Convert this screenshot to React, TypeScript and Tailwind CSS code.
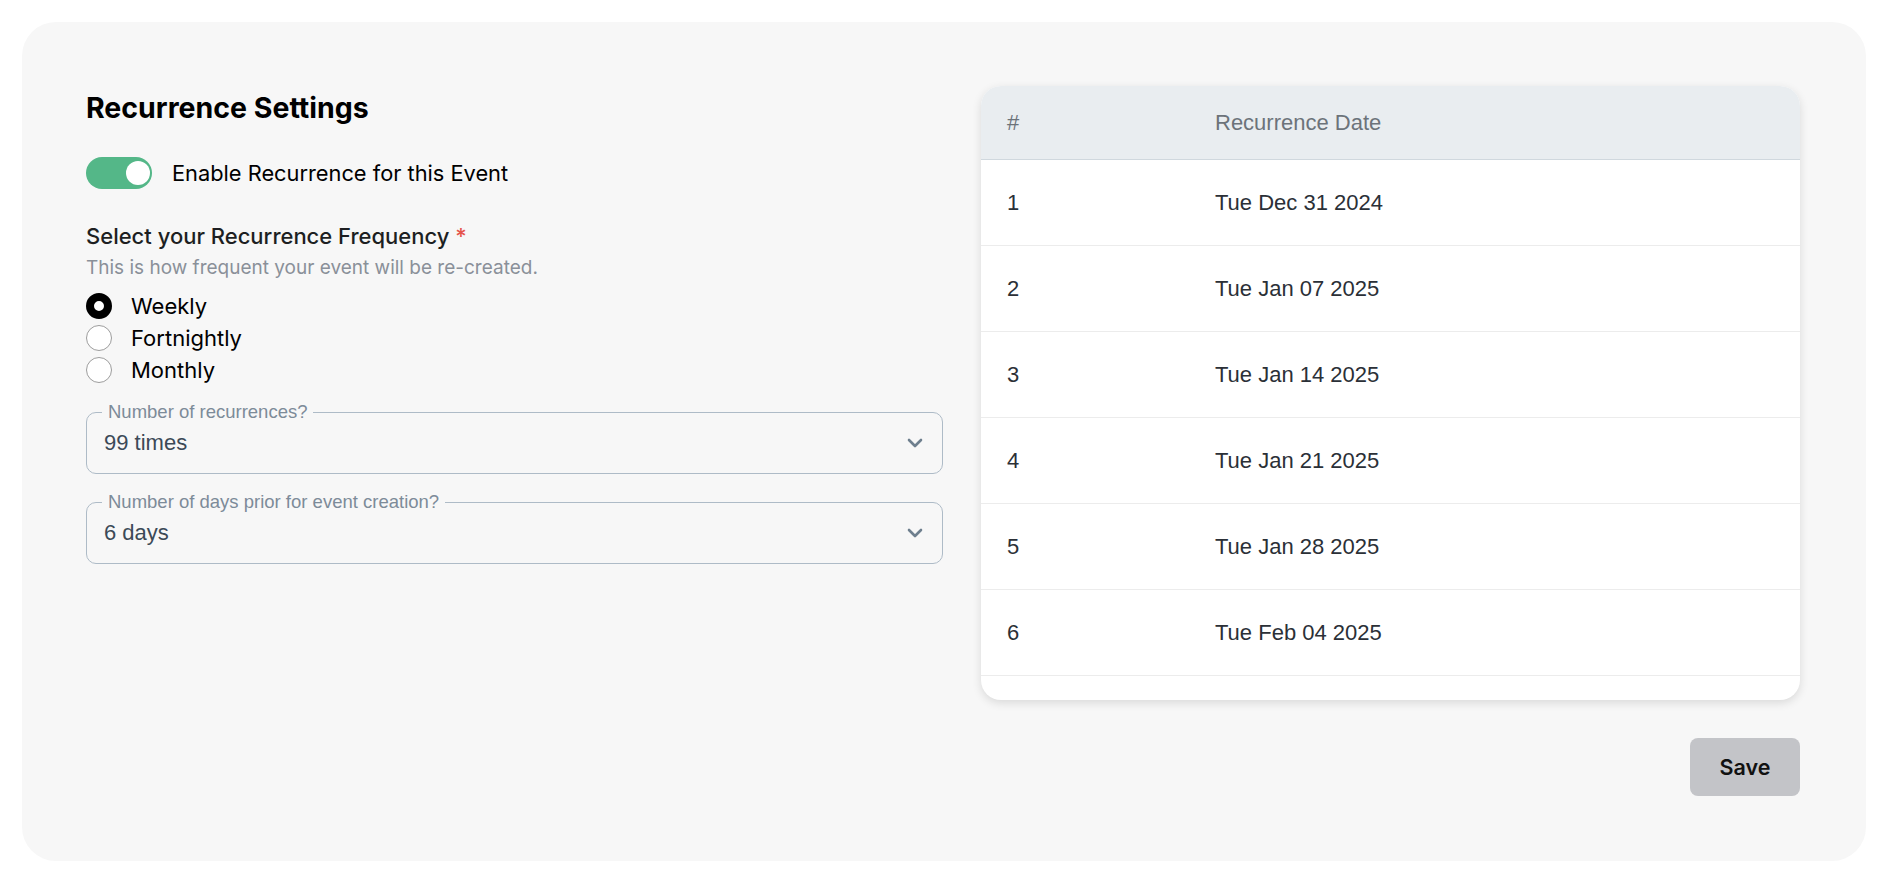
import { useState } from "react";

const dates = [
  "Tue Dec 31 2024",
  "Tue Jan 07 2025",
  "Tue Jan 14 2025",
  "Tue Jan 21 2025",
  "Tue Jan 28 2025",
  "Tue Feb 04 2025",
];

const frequencies = ["Weekly", "Fortnightly", "Monthly"];

function Chevron() {
  return (
    <svg width="16" height="10" viewBox="0 0 16 10" fill="none">
      <polyline
        points="2,2 8,8 14,2"
        stroke="#6e7f8e"
        strokeWidth="2.6"
        strokeLinecap="round"
        strokeLinejoin="round"
      />
    </svg>
  );
}

function OutlinedSelect({ label, value }: { label: string; value: string }) {
  return (
    <div className="relative h-[62px] rounded-[10px] border border-[#aebbc7] pl-[17px] pr-[19px] flex items-center justify-between">
      <span className="absolute left-[15px] top-[-11px] px-[6px] bg-[#f7f7f7] text-[18.5px] leading-[20px] text-[#7d8b99] font-['Liberation_Sans',Arial,sans-serif]">
        {label}
      </span>
      <span className="text-[22px] leading-[28px] text-[#3c4a57] font-['Liberation_Sans',Arial,sans-serif]">
        {value}
      </span>
      <Chevron />
    </div>
  );
}

export default function App() {
  const [enabled, setEnabled] = useState(true);
  const [freq, setFreq] = useState("Weekly");

  return (
    <main className="min-h-screen bg-white pt-[22px] pl-[22px] pr-[24px] pb-[24px] font-['Inter',sans-serif]">
      <div className="bg-[#f7f7f7] rounded-[34px] pt-[64px] pb-[65px] pl-[64px] pr-[66px] grid grid-cols-2">
        <section className="flex flex-col">
          <h1 className="text-[28.5px] leading-[44px] font-bold text-black">
            Recurrence Settings
          </h1>

          <div className="mt-[27px] h-[32px] flex items-center gap-[20px]">
            <button
              type="button"
              onClick={() => setEnabled(!enabled)}
              className={`relative w-[66px] h-[32px] rounded-full ${
                enabled ? "bg-[#54b788]" : "bg-[#c6c8cc]"
              }`}
            >
              <span
                className={`absolute top-[4px] w-[24px] h-[24px] rounded-full bg-white ${
                  enabled ? "right-[2px]" : "left-[3px]"
                }`}
              />
            </button>
            <span className="text-[21.8px] leading-[32px] text-black">
              Enable Recurrence for this Event
            </span>
          </div>

          <p className="mt-[33px] text-[22px] leading-[28px] font-medium text-[#1d1f22]">
            Select your Recurrence Frequency{" "}
            <span className="text-[#e5534b]">*</span>
          </p>
          <p className="mt-[6px] text-[19px] leading-[24px] text-[#8a9099]">
            This is how frequent your event will be re-created.
          </p>

          <div className="mt-[10px] flex flex-col">
            {frequencies.map((f) => (
              <label
                key={f}
                onClick={() => setFreq(f)}
                className="h-[32px] flex items-center gap-[19px] cursor-pointer"
              >
                <span
                  className={`w-[26px] h-[26px] rounded-full bg-white ${
                    freq === f
                      ? "border-[8px] border-black"
                      : "border border-[#9d9d9d]"
                  }`}
                />
                <span className="text-[22px] leading-[32px] text-black">{f}</span>
              </label>
            ))}
          </div>

          <div className="mt-[26px] flex flex-col gap-[28px]">
            <OutlinedSelect label="Number of recurrences?" value="99 times" />
            <OutlinedSelect
              label="Number of days prior for event creation?"
              value="6 days"
            />
          </div>
        </section>

        <section className="pl-[38px] flex flex-col">
          <div className="rounded-[20px] overflow-hidden bg-white shadow-[0_3px_10px_rgba(0,0,0,0.12)] font-['Liberation_Sans',Arial,sans-serif] text-[22px]">
            <div className="h-[74px] bg-[#e9edf0] border-b border-[#d0d8de] grid grid-cols-[209px_1fr] items-center text-[#6c737a]">
              <span className="pl-[26px]">#</span>
              <span className="pl-[25px]">Recurrence Date</span>
            </div>
            <div className="h-[540px]">
              {dates.map((d, i) => (
                <div
                  key={d}
                  className="h-[86px] border-b border-[#ececec] grid grid-cols-[209px_1fr] items-center text-[#2b3037]"
                >
                  <span className="pl-[26px]">{i + 1}</span>
                  <span className="pl-[25px]">{d}</span>
                </div>
              ))}
            </div>
          </div>

          <div className="mt-[38px] flex justify-end">
            <button
              type="button"
              className="w-[110px] h-[58px] rounded-[8px] bg-[#c3c4c8] text-[21.5px] font-semibold text-[#111]"
            >
              Save
            </button>
          </div>
        </section>
      </div>
    </main>
  );
}
